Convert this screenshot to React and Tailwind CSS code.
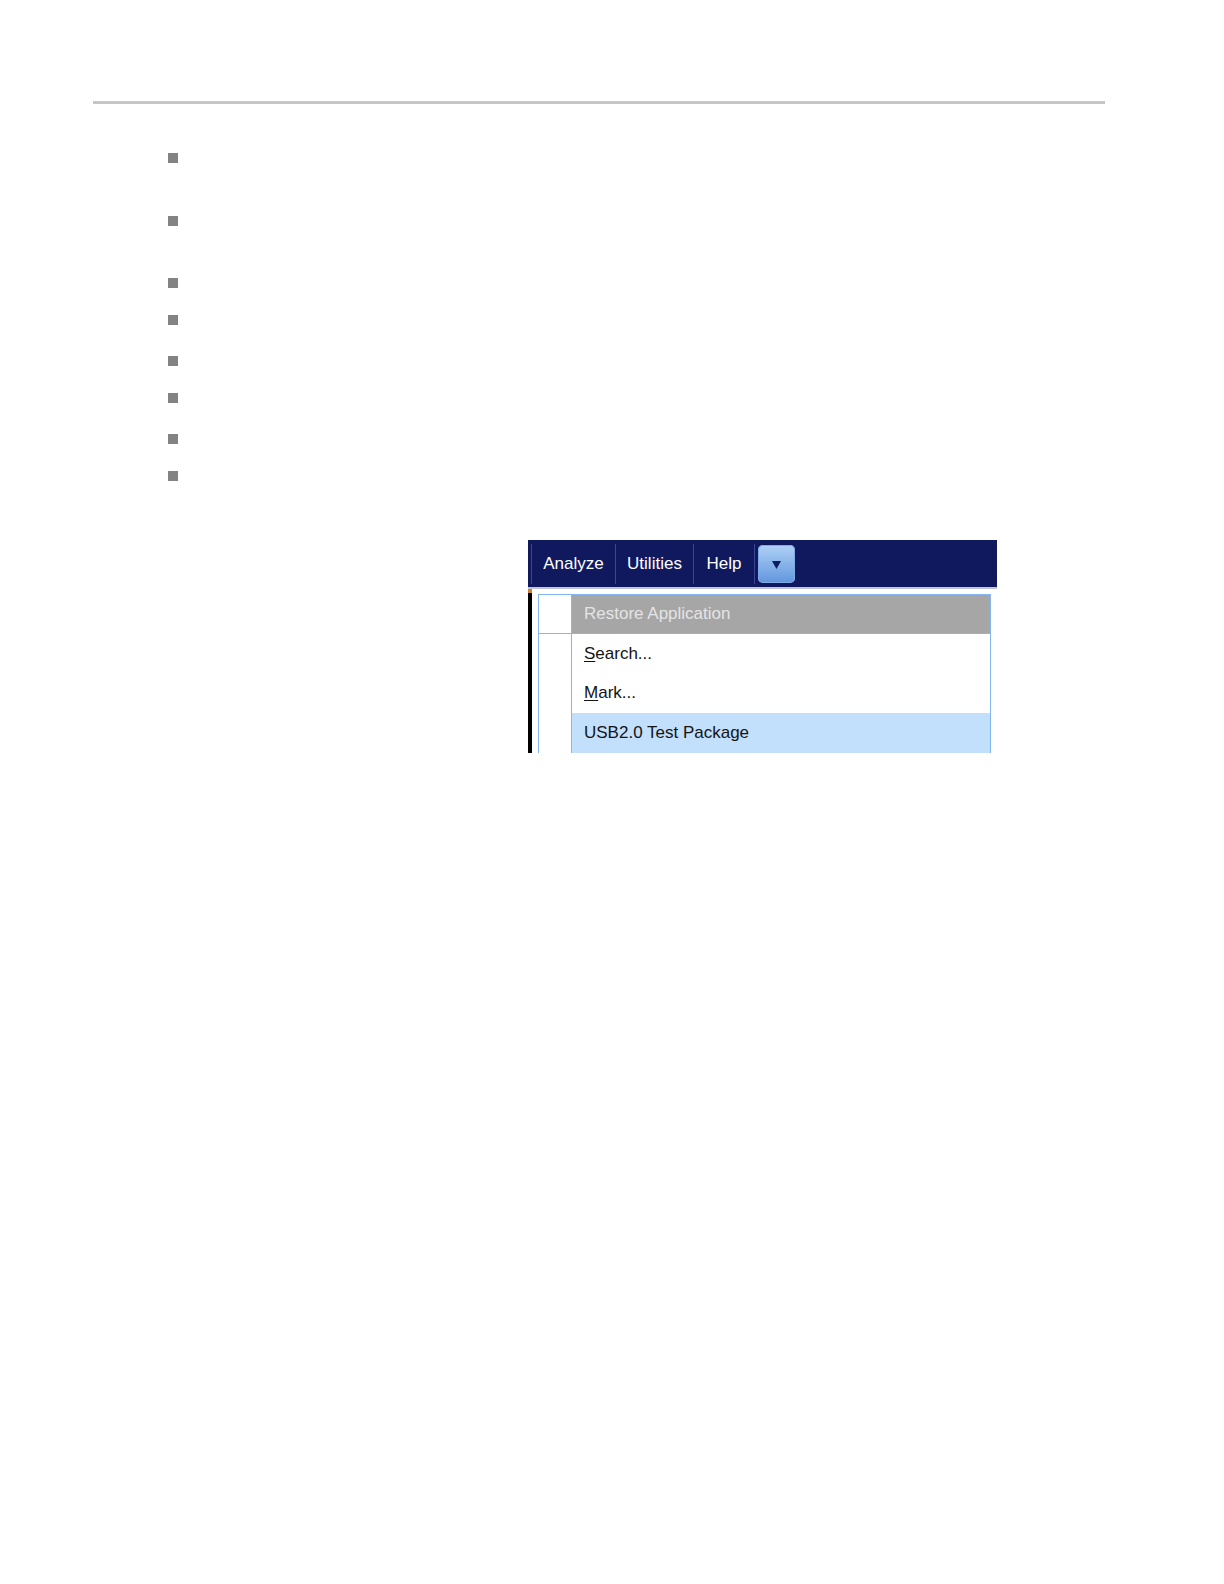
import React from 'react'

const bullets = ['h-[63px]', 'h-[62px]', 'h-[37px]', 'h-[41px]', 'h-[37px]', 'h-[41px]', 'h-[37px]', 'h-[10px]']

const Sep = () => <div className="w-px h-[40px] bg-[#3a4694]" />

const App = () => {
  return (
    <div className="w-[1224px] min-h-[1584px] bg-white pt-[101px] font-['Liberation_Sans',Arial,sans-serif]">
      {/* top rule */}
      <div className="ml-[93px] w-[1012px] h-[3px] bg-[#c6c6c6]" />

      {/* empty bullet list */}
      <ul className="ml-[168px] mt-[49px] flex flex-col">
        {bullets.map((h, i) => (
          <li key={i} className={h}>
            <div className="w-[10px] h-[10px] bg-[#838383]" />
          </li>
        ))}
      </ul>

      {/* screenshot of the menu */}
      <div className="ml-[528px] mt-[59px] w-[469px] h-[213px] flex flex-col overflow-hidden">
        <div className="h-[47px] shrink-0 bg-[#10195d] flex items-center pl-[3px] text-white text-[17px]">
          <Sep />
          <div className="w-[83px] text-center">Analyze</div>
          <Sep />
          <div className="w-[77px] text-center">Utilities</div>
          <Sep />
          <div className="w-[60px] text-center">Help</div>
          <Sep />
          <div className="ml-[3px] w-[37px] h-[38px] rounded-[5px] bg-gradient-to-b from-[#b0d1f6] to-[#6196dd] flex items-center justify-center shadow-[inset_0_0_0_1px_#7eaae6]">
            <svg width="11" height="10" viewBox="0 0 11 10" className="mt-[3px]">
              <polygon points="1,1 10,1 5.5,9" fill="#0b1d63" />
            </svg>
          </div>
        </div>
        <div className="h-[2px] shrink-0 bg-[#bfc4d6]" />
        <div className="flex-1 flex">
          <div className="w-[4px] bg-black flex flex-col">
            <div className="h-[4px] bg-[#c9852a]" />
          </div>
          <div className="flex-1 bg-white pl-[6px] pt-[5px]">
            <div className="w-[453px] h-full border-l border-t border-r border-[#86b6ef] text-[17px]">
              <div className="flex h-[39px] border-b border-[#86b6ef]">
                <div className="w-[33px] border-r border-[#86b6ef] bg-white" />
                <div className="flex-1 bg-[#a6a6a6] text-[#e4e4e4] pl-[12px] flex items-center">Restore Application</div>
              </div>
              <div className="flex h-[39px]">
                <div className="w-[33px] border-r border-[#86b6ef]" />
                <div className="flex-1 pl-[12px] flex items-center text-[#141414]">
                  <span><span className="underline underline-offset-2">S</span>earch...</span>
                </div>
              </div>
              <div className="flex h-[40px]">
                <div className="w-[33px] border-r border-[#86b6ef]" />
                <div className="flex-1 pl-[12px] flex items-center text-[#141414]">
                  <span><span className="underline underline-offset-2">M</span>ark...</span>
                </div>
              </div>
              <div className="flex h-[40px]">
                <div className="w-[33px] border-r border-[#86b6ef]" />
                <div className="flex-1 pl-[12px] flex items-center bg-[#c2dffc] text-[#141414]">USB2.0 Test Package</div>
              </div>
            </div>
          </div>
        </div>
      </div>
    </div>
  )
}

export default App
